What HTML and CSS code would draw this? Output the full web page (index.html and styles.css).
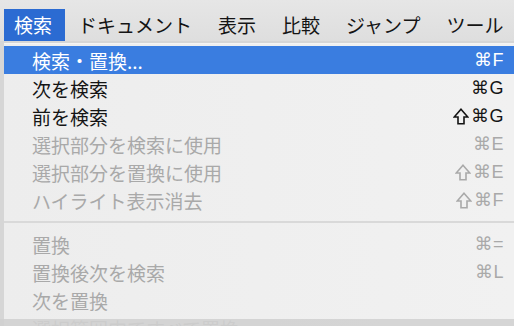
FILE: index.html
```html
<!DOCTYPE html>
<html lang="ja">
<head>
  <meta charset="UTF-8" />
  <title>検索メニュー</title>
  <link rel="stylesheet" href="styles.css">
</head>
<body>

  <!-- Menu bar -->
  <div class="menubar">
    <span class="menu-title active">検索</span>
    <span class="menu-title">ドキュメント</span>
    <span class="menu-title">表示</span>
    <span class="menu-title">比較</span>
    <span class="menu-title">ジャンプ</span>
    <span class="menu-title">ツール</span>
  </div>

  <!-- Dropdown -->
  <div class="dropdown">
    <ul class="menu">
      <li class="item selected"><span>検索・置換...</span><span class="key">⌘F</span></li>
      <li class="item"><span>次を検索</span><span class="key">⌘G</span></li>
      <li class="item"><span>前を検索</span><span class="key"><svg class="shift" viewBox="0 0 16 17"><path d="M8 1.2 L14.8 9 H11 V15.8 H5 V9 H1.2 Z"/></svg>⌘G</span></li>
      <li class="item disabled"><span>選択部分を検索に使用</span><span class="key">⌘E</span></li>
      <li class="item disabled"><span>選択部分を置換に使用</span><span class="key"><svg class="shift" viewBox="0 0 16 17"><path d="M8 1.2 L14.8 9 H11 V15.8 H5 V9 H1.2 Z"/></svg>⌘E</span></li>
      <li class="item disabled"><span>ハイライト表示消去</span><span class="key"><svg class="shift" viewBox="0 0 16 17"><path d="M8 1.2 L14.8 9 H11 V15.8 H5 V9 H1.2 Z"/></svg>⌘F</span></li>
      <li class="separator"></li>
      <li class="item disabled"><span>置換</span><span class="key">⌘=</span></li>
      <li class="item disabled"><span>置換後次を検索</span><span class="key">⌘L</span></li>
      <li class="item disabled"><span>次を置換</span><span class="key"></span></li>
      <li class="item disabled"><span>選択範囲内ですべて置換</span><span class="key"></span></li>
    </ul>
  </div>

</body>
</html>
```

FILE: styles.css
```css
* { margin: 0; padding: 0; box-sizing: border-box; }
html, body { height: 326px; overflow: hidden; }
body {
  font-family: "Noto Sans CJK JP", "Noto Sans", sans-serif;
  background: #d6d6d6;
  color: #141414;
  position: relative;
}
/* darker band at the very bottom of the shot */
body::after {
  content: "";
  position: absolute;
  left: 0; right: 0; bottom: 0;
  height: 7px;
  background: rgba(208, 208, 208, 0.88);
}

/* ---- menu bar ---- */
.menubar {
  display: flex;
  align-items: flex-end;
  height: 41px;
  padding-left: 4px;
  background: linear-gradient(#e6e6e6, #dedede);
}
.menu-title {
  height: 32px;
  line-height: 31px;
  padding: 0 13px;
  font-size: 19px;
  white-space: nowrap;
}
.menu-title:first-child { padding-left: 10px; }
.menu-title.active {
  background: #2b6bd2;
  color: #fff;
}

/* ---- dropdown ---- */
.dropdown {
  margin: 2px 0 0 4px;
  padding-top: 2px;
  height: 300px;
  background: linear-gradient(to right, #ededed, #f1f1f1);
  border-top: 1px solid #f4f4f4;
}
.menu { list-style: none; }
.item {
  display: flex;
  justify-content: space-between;
  align-items: center;
  height: 28px;
  padding: 0 10px 0 28px;
  font-size: 19px;
  white-space: nowrap;
}
.item.selected {
  background: #3a7de0;
  color: #fff;
}
.item.disabled { color: #a9a9a9; }
.key {
  display: flex;
  align-items: center;
  font-family: "Liberation Sans", "DejaVu Sans", sans-serif;
  font-size: 18px;
  letter-spacing: 0.5px;
}
.shift {
  width: 16px;
  height: 17px;
  margin-right: 2px;
  fill: none;
  stroke: currentColor;
  stroke-width: 1.6;
  stroke-linejoin: miter;
}
.separator {
  height: 16px;
  display: flex;
  align-items: center;
}
.separator::before {
  content: "";
  flex: 1;
  height: 2px;
  background: #d9d9d9;
}
```
